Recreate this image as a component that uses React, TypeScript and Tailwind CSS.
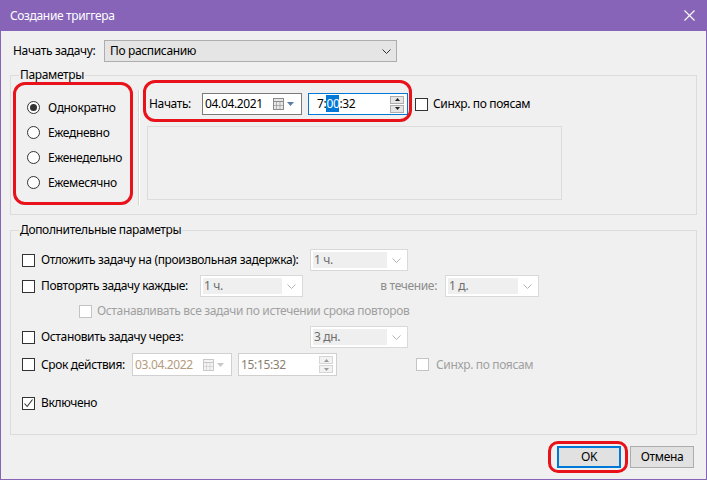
const Chevron = ({ color = "#333" }: { color?: string }) => (
  <svg width="9" height="5" viewBox="0 0 9 5">
    <polyline points="0.5,0.5 4.5,4.5 8.5,0.5" fill="none" stroke={color} strokeWidth="1" />
  </svg>
)

const Check = ({ checked = false, disabled = false }: { checked?: boolean; disabled?: boolean }) => (
  <div
    className={`w-[13px] h-[13px] shrink-0 border bg-white flex items-center justify-center ${
      disabled ? "border-[#c4c4c4]" : "border-[#333333]"
    }`}
  >
    {checked && (
      <svg width="11" height="11" viewBox="0 0 11 11">
        <polyline points="1.5,5.5 4.2,8.5 9.5,1.5" fill="none" stroke="#333" strokeWidth="1.1" />
      </svg>
    )}
  </div>
)

const Radio = ({ checked = false }: { checked?: boolean }) => (
  <div className="w-[13px] h-[13px] shrink-0 rounded-full border border-[#333333] bg-white flex items-center justify-center">
    {checked && <div className="w-[7px] h-[7px] rounded-full bg-[#333333]" />}
  </div>
)

const Combo = ({ value, w }: { value: string; w: string }) => (
  <div className={`${w} h-[22px] shrink-0 border border-[#d9d9d9] bg-white flex items-center p-[2px]`}>
    <div className="flex-1 h-full bg-[#efefef] flex items-center pl-[1px] text-[#6d6d6d]">{value}</div>
    <div className="w-[18px] flex justify-center">
      <Chevron color="#b4b4b4" />
    </div>
  </div>
)

const CalIcon = ({ disabled = false }: { disabled?: boolean }) => {
  const c = disabled ? "#c8c8c8" : "#8a8a8a"
  return (
    <div className="flex items-center gap-[3px]">
      <svg width="11" height="12" viewBox="0 0 11 12">
        <rect x="0.5" y="0.5" width="10" height="11" fill={disabled ? "#f4f4f4" : "#e8e8e8"} stroke={c} />
        <line x1="0.5" y1="3.5" x2="10.5" y2="3.5" stroke={c} />
        <line x1="3.5" y1="3.5" x2="3.5" y2="11.5" stroke={c} strokeWidth="0.6" />
        <line x1="7" y1="3.5" x2="7" y2="11.5" stroke={c} strokeWidth="0.6" />
        <line x1="0.5" y1="7.5" x2="10.5" y2="7.5" stroke={c} strokeWidth="0.6" />
      </svg>
      <svg width="7" height="4" viewBox="0 0 7 4">
        <polygon points="0,0 7,0 3.5,4" fill={disabled ? "#c8c8c8" : "#5a7aa8"} />
      </svg>
    </div>
  )
}

const Spinner = ({ disabled = false }: { disabled?: boolean }) => {
  const b = disabled ? "border-[#d6d6d6] bg-[#f2f2f2]" : "border-[#adadad] bg-[#e5e5e5]"
  const f = disabled ? "#9a9a9a" : "#222"
  return (
    <div className="flex flex-col gap-[1px]">
      <div className={`w-[14px] h-[8px] border ${b} flex items-center justify-center`}>
        <svg width="5" height="3" viewBox="0 0 5 3">
          <polygon points="0,3 5,3 2.5,0" fill={f} />
        </svg>
      </div>
      <div className={`w-[14px] h-[8px] border ${b} flex items-center justify-center`}>
        <svg width="5" height="3" viewBox="0 0 5 3">
          <polygon points="0,0 5,0 2.5,3" fill={f} />
        </svg>
      </div>
    </div>
  )
}

export default function App() {
  return (
    <div className="relative w-[707px] h-[480px] bg-[#f0f0f0] border-x border-b border-[#8764b8] flex flex-col font-['Noto_Sans',sans-serif] text-[12px] tracking-[-0.35px] text-black leading-[16px]">
      {/* title bar */}
      <div className="h-[31px] shrink-0 bg-[#8764b8] flex items-center justify-between pl-[9px] pr-[11px] text-white">
        <span>Создание триггера</span>
        <svg width="11" height="11" viewBox="0 0 11 11">
          <line x1="0.5" y1="0.5" x2="10.5" y2="10.5" stroke="white" strokeWidth="1.1" />
          <line x1="10.5" y1="0.5" x2="0.5" y2="10.5" stroke="white" strokeWidth="1.1" />
        </svg>
      </div>

      <div className="flex flex-col px-[9px]">
        {/* start task */}
        <div className="mt-[9px] h-[22px] flex items-center">
          <span className="ml-[3px] w-[91px]">Начать задачу:</span>
          <div className="w-[293px] h-[22px] bg-[#e5e5e5] border border-[#adadad] flex items-center justify-between pl-[5px] pr-[5px]">
            <span>По расписанию</span>
            <Chevron />
          </div>
        </div>

        {/* Параметры */}
        <div className="relative mt-[13px] h-[140px] border border-[#dcdcdc]">
          <span className="absolute left-[8px] -top-[9px] bg-[#f0f0f0] px-[1px]">Параметры</span>
          <div className="flex pt-[14px]">
            <div className="w-[127px] pt-[5px] pl-[16px] flex flex-col">
              {["Однократно", "Ежедневно", "Еженедельно", "Ежемесячно"].map((t, i) => (
                <div key={t} className="h-[25px] flex items-center gap-[8px]">
                  <Radio checked={i === 0} />
                  <span>{t}</span>
                </div>
              ))}
            </div>
            <div className="w-[2px] h-[115px] border-l border-r border-l-[#d5d5d5] border-r-white" />
            <div className="pl-[9px] pt-[3px] flex flex-col">
              <div className="h-[22px] flex items-center">
                <span className="w-[53px]">Начать:</span>
                <div className="w-[100px] h-[22px] border border-[#7a7a7a] bg-white flex items-center justify-between pl-[2px] pr-[7px]">
                  <span>04.04.2021</span>
                  <CalIcon />
                </div>
                <div className="ml-[6px] w-[100px] h-[22px] border border-[#0078d7] bg-white flex items-center justify-between pl-[8px] pr-[3px]">
                  <span>
                    7:<span className="bg-[#0078d7] text-white">00</span>:32
                  </span>
                  <Spinner />
                </div>
                <div className="ml-[7px]">
                  <Check />
                </div>
                <span className="ml-[5px]">Синхр. по поясам</span>
              </div>
              <div className="mt-[11px] -ml-[2px] w-[415px] h-[74px] border border-[#dcdcdc]" />
            </div>
          </div>
        </div>

        {/* Дополнительные параметры */}
        <div className="relative mt-[15px] h-[205px] border border-[#dcdcdc]">
          <span className="absolute left-[8px] -top-[9px] bg-[#f0f0f0] px-[1px]">Дополнительные параметры</span>
          <div className="flex flex-col pt-[18px] pl-[11px]">
            <div className="h-[22px] flex items-center">
              <div className="w-[288px] flex items-center gap-[6px] whitespace-nowrap">
                <Check />
                <span>Отложить задачу на (произвольная задержка):</span>
              </div>
              <Combo value="1 ч." w="w-[98px]" />
            </div>
            <div className="mt-[4px] h-[22px] flex items-center">
              <div className="w-[178px] flex items-center gap-[6px] whitespace-nowrap">
                <Check />
                <span>Повторять задачу каждые:</span>
              </div>
              <Combo value="1 ч." w="w-[103px]" />
              <span className="w-[142px] text-right pr-[8px] text-[#8c8c8c]">в течение:</span>
              <Combo value="1 д." w="w-[94px]" />
            </div>
            <div className="mt-[3px] h-[22px] flex items-center gap-[5px] pl-[57px]">
              <Check disabled />
              <span className="text-[#a0a0a0]">Останавливать все задачи по истечении срока повторов</span>
            </div>
            <div className="mt-[4px] h-[22px] flex items-center">
              <div className="w-[288px] flex items-center gap-[6px] whitespace-nowrap">
                <Check />
                <span>Остановить задачу через:</span>
              </div>
              <Combo value="3 дн." w="w-[98px]" />
            </div>
            <div className="mt-[5px] h-[23px] flex items-center">
              <div className="w-[110px] flex items-center gap-[6px] whitespace-nowrap">
                <Check />
                <span>Срок действия:</span>
              </div>
              <div className="w-[100px] h-[23px] border border-[#d0d0d0] bg-white flex items-center justify-between pl-[2px] pr-[7px]">
                <span className="text-[#b49a7e]">03.04.2022</span>
                <CalIcon disabled />
              </div>
              <div className="ml-[6px] w-[99px] h-[23px] border border-[#d0d0d0] bg-white flex items-center justify-between pl-[2px] pr-[3px]">
                <span className="text-[#8a7e72]">15:15:32</span>
                <Spinner disabled />
              </div>
              <div className="ml-[79px] flex items-center gap-[7px]">
                <Check disabled />
                <span className="text-[#a0a0a0]">Синхр. по поясам</span>
              </div>
            </div>
            <div className="mt-[16px] h-[22px] flex items-center gap-[6px]">
              <Check checked />
              <span>Включено</span>
            </div>
          </div>
        </div>

        {/* buttons */}
        <div className="mt-[11px] flex justify-end gap-[9px] mr-[3px]">
          <button className="w-[64px] h-[22px] bg-[#e1e1e1] border-2 border-[#0078d7] flex items-center justify-center">
            OK
          </button>
          <button className="w-[64px] h-[22px] bg-[#e1e1e1] border border-[#adadad] flex items-center justify-center">
            Отмена
          </button>
        </div>
      </div>

      {/* red annotations */}
      <div className="absolute left-[12px] top-[82px] w-[120px] h-[123px] border-[3px] border-[#e8121a] rounded-[12px]" />
      <div className="absolute left-[142px] top-[80px] w-[269px] h-[42px] border-[3px] border-[#e8121a] rounded-[12px]" />
      <div className="absolute left-[547px] top-[441px] w-[80px] h-[32px] border-[3px] border-[#e8121a] rounded-[10px]" />
    </div>
  )
}
